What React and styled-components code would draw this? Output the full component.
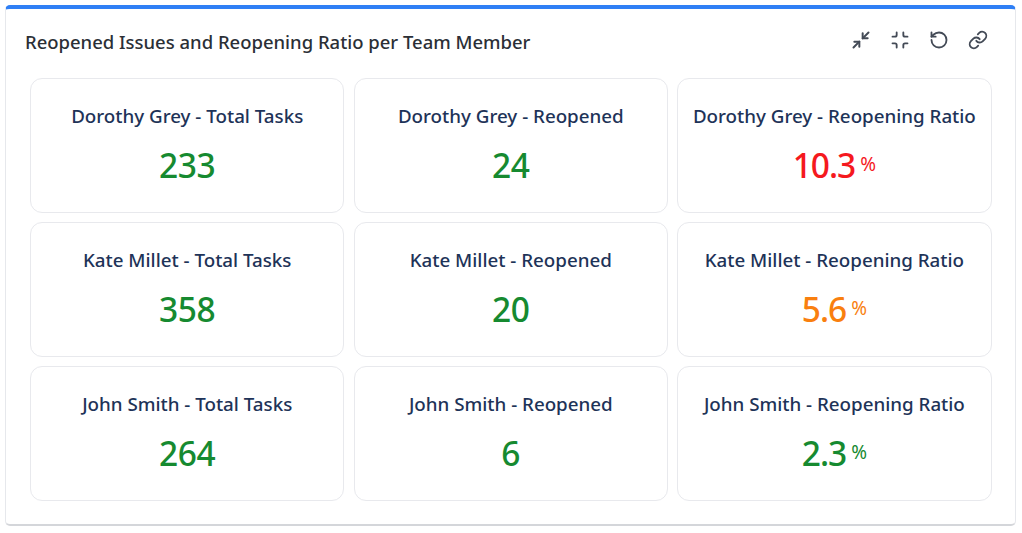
import React from 'react'
import styled, { createGlobalStyle } from 'styled-components'
import { Minimize, RotateCcw, Link } from 'lucide-react'

const GlobalStyle = createGlobalStyle`
  html, body {
    margin: 0;
    padding: 0;
    background: #fff;
    font-family: "Noto Sans", "Open Sans", sans-serif;
  }
`

const Page = styled.div`
  width: 1022px;
  height: 533px;
  box-sizing: border-box;
  padding: 5px 6px 7px 5px;
`

const Panel = styled.section`
  height: 521px;
  box-sizing: border-box;
  background: #fff;
  border: 1px solid #e6e8ec;
  border-top: 4px solid #2f7ff5;
  border-bottom: 2px solid #d4d6da;
  border-radius: 5px;
  padding: 0 24px 0 24px;
`

const Header = styled.header`
  display: flex;
  align-items: center;
  justify-content: space-between;
  height: 68.6px;
`

const Title = styled.h2`
  margin: 0 0 0 -5px;
  font-size: 18.48px;
  line-height: 24px;
  font-weight: 500;
  color: #2b2f36;
  padding-bottom: 3px;
`

const Tools = styled.div`
  display: flex;
  align-items: center;
  gap: 19px;
  margin-right: 3.5px;
  padding-bottom: 6px;
  color: #434a56;
`

const Grid = styled.div`
  display: grid;
  grid-template-columns: repeat(3, 314.4px);
  grid-auto-rows: 135px;
  gap: 9px 9.2px;
`

const Card = styled.article`
  box-sizing: border-box;
  border: 1px solid #e8e9ed;
  border-radius: 12px;
  display: flex;
  flex-direction: column;
  align-items: center;
  padding-top: 24px;
`

const Label = styled.div`
  font-size: 18.75px;
  line-height: 26px;
  font-weight: 500;
  color: #1e3358;
  white-space: nowrap;
`

const Value = styled.div`
  display: flex;
  align-items: flex-start;
  margin-top: 13px;
  font-size: 33.5px;
  line-height: 46px;
  font-weight: 500;
  letter-spacing: ${p => (p.$tight ? '-1px' : '-0.3px')};
  color: ${p => p.$color};
`

const Unit = styled.span`
  font-size: 19px;
  line-height: 18px;
  font-weight: 400;
  letter-spacing: 0;
  margin: 13px 0 0 5px;
`

const GREEN = '#168a30'
const RED = '#f5191e'
const ORANGE = '#f97f0f'

const people = [
  { name: 'Dorothy Grey', total: 233, reopened: 24, ratio: 10.3, color: RED },
  { name: 'Kate Millet', total: 358, reopened: 20, ratio: 5.6, color: ORANGE },
  { name: 'John Smith', total: 264, reopened: 6, ratio: 2.3, color: GREEN },
]

const ShrinkIcon = () => (
  <svg width="20" height="20" viewBox="0 0 24 24" fill="none" stroke="currentColor" strokeWidth="2.4" strokeLinecap="round" strokeLinejoin="round">
    <path d="M14 10l7-7" />
    <path d="M20 10h-6V4" />
    <path d="M3 21l7-7" />
    <path d="M4 14h6v6" />
  </svg>
)

const App = () => {
  return (
    <Page>
      <GlobalStyle />
      <Panel>
        <Header>
          <Title>Reopened Issues and Reopening Ratio per Team Member</Title>
          <Tools>
            <ShrinkIcon />
            <Minimize size={20} strokeWidth={2.2} />
            <RotateCcw size={20} strokeWidth={2.2} />
            <Link size={20} strokeWidth={2.2} />
          </Tools>
        </Header>
        <Grid>
          {people.map(item => (
            <React.Fragment key={item.name}>
              <Card>
                <Label>{item.name} - Total Tasks</Label>
                <Value $color={GREEN}>{item.total}</Value>
              </Card>
              <Card>
                <Label>{item.name} - Reopened</Label>
                <Value $color={GREEN}>{item.reopened}</Value>
              </Card>
              <Card>
                <Label>{item.name} - Reopening Ratio</Label>
                <Value $color={item.color} $tight>
                  {item.ratio}
                  <Unit>%</Unit>
                </Value>
              </Card>
            </React.Fragment>
          ))}
        </Grid>
      </Panel>
    </Page>
  )
}

export default App
